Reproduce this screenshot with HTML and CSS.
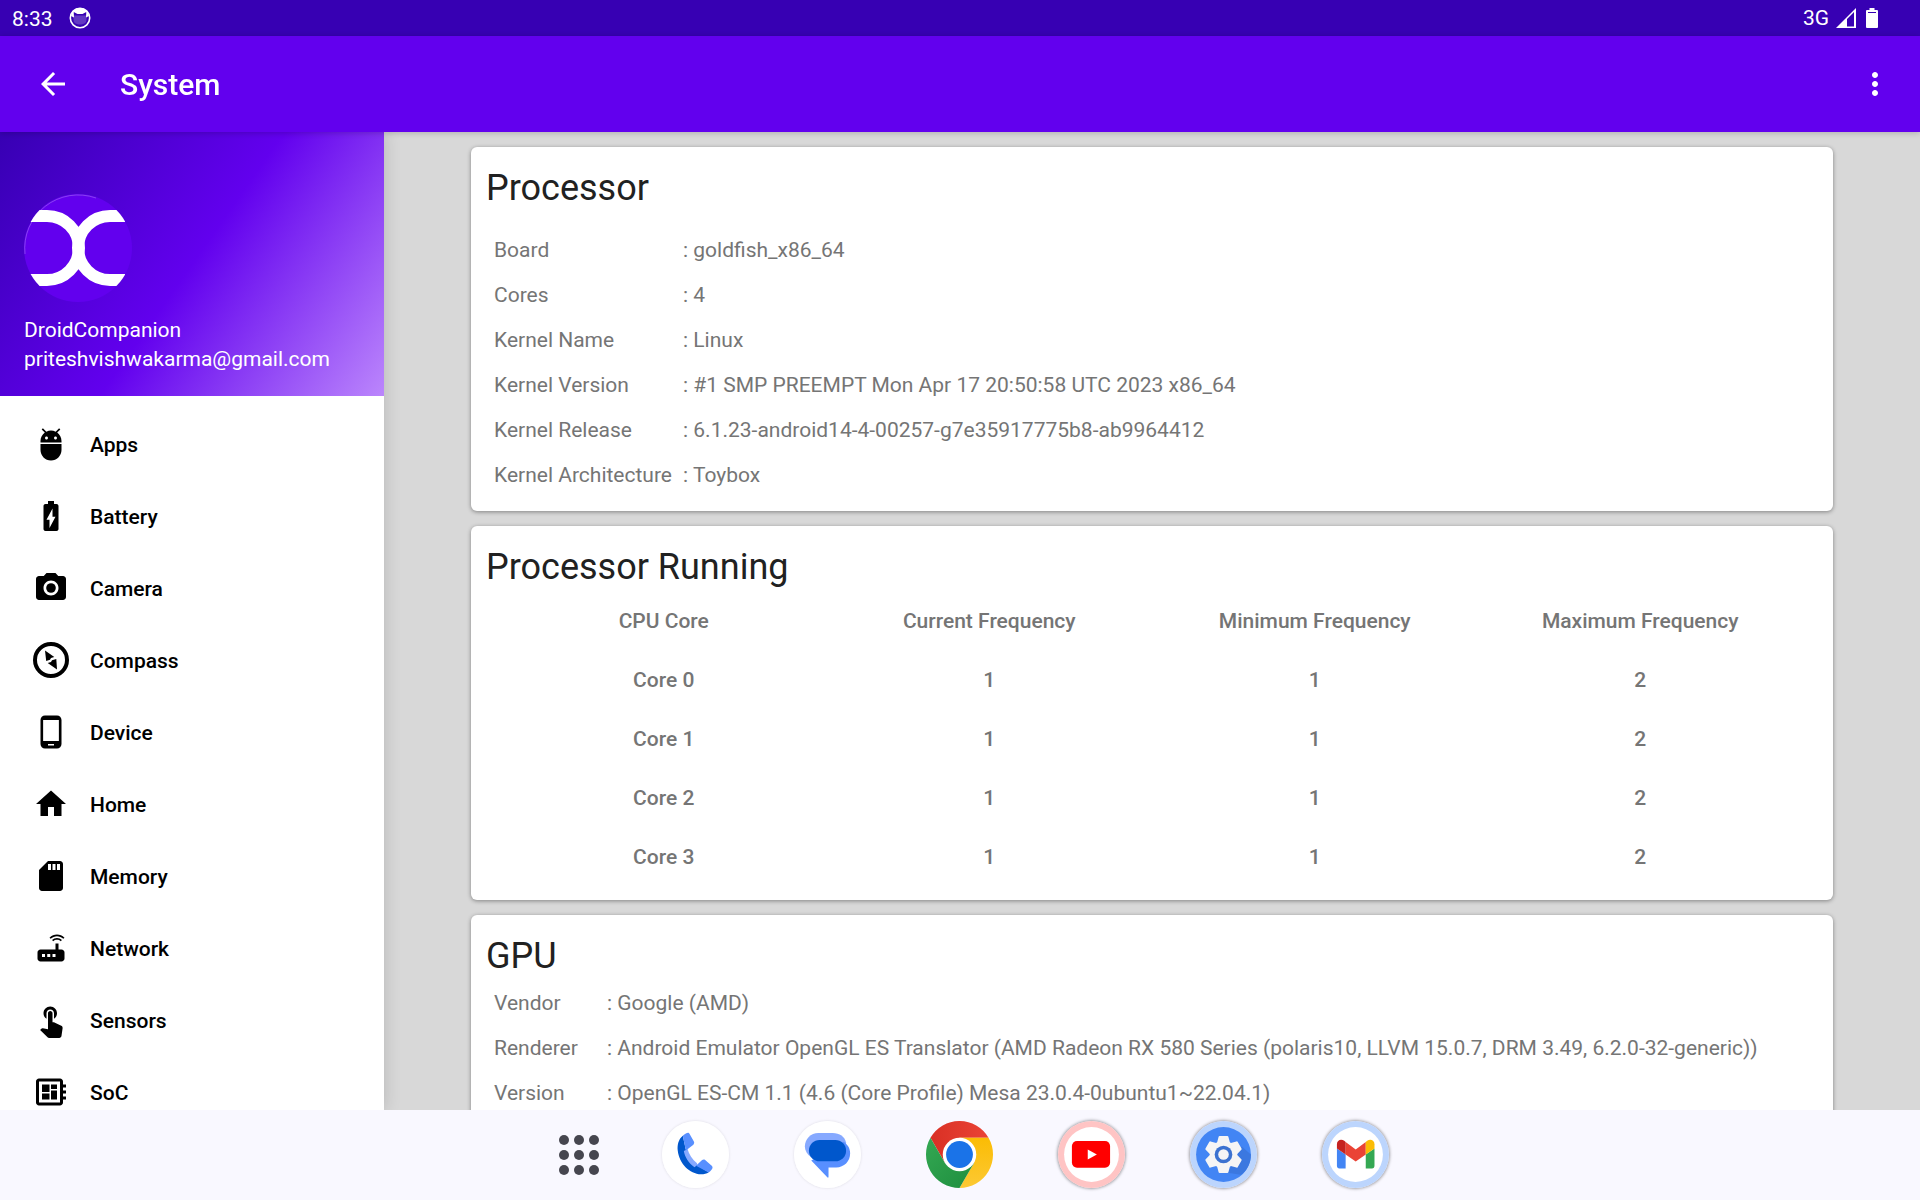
FILE: index.html
```html
<!DOCTYPE html>
<html lang="en">
<head>
<meta charset="utf-8">
<meta name="viewport" content="width=device-width, initial-scale=1">
<title>System</title>
<link rel="stylesheet" href="styles.css">
</head>
<body>
<div class="status-bar">
  <span class="status-time">8:33</span>
  <svg class="status-cat" viewBox="0 0 22 22" aria-hidden="true">
    <circle cx="11" cy="11" r="9.700" fill="none" stroke="#fff" stroke-width="1.600"/>
    <path fill="#fff" d="M2 9C3 4 6 1 11 1s8 3 9 8l-3 1.500.3-5.500L13.500 7h-5L4.700 5 5 10.500z"/>
    <path fill="#fff" opacity=".22" d="M4.500 8.500h13v4.500c0 3-3 4.500-6.500 4.500S4.500 16 4.500 13z"/>
  </svg>
  <div class="status-right">
    <span>3G</span>
    <svg class="status-signal" viewBox="0 0 20 20" aria-hidden="true"><path fill="#fff" fill-rule="evenodd" d="M0 20L20 0v20zM11 11v7.500h7V4z"/></svg>
    <svg class="status-battery" viewBox="0 0 12 20" aria-hidden="true"><path fill="#fff" fill-rule="evenodd" d="M3.500 0h5v2H11a1 1 0 0 1 1 1v16a1 1 0 0 1-1 1H1a1 1 0 0 1-1-1V3a1 1 0 0 1 1-1h2.500zM2 4v1h8V4z"/></svg>
  </div>
</div>

<header class="app-bar">
  <button class="icon-button" type="button" aria-label="Back">
    <svg class="icon" viewBox="0 0 24 24"><path d="M20 11H7.830l5.590-5.590L12 4l-8 8 8 8 1.410-1.410L7.830 13H20v-2z"/></svg>
  </button>
  <h1 class="app-title">System</h1>
  <button class="icon-button" type="button" aria-label="More options">
    <svg class="icon" viewBox="0 0 24 24"><path d="M12 8c1.100 0 2-.9 2-2s-.9-2-2-2-2 .9-2 2 .9 2 2 2zm0 2c-1.100 0-2 .9-2 2s.9 2 2 2 2-.9 2-2-.9-2-2-2zm0 6c-1.100 0-2 .9-2 2s.9 2 2 2 2-.9 2-2-.9-2-2-2z"/></svg>
  </button>
</header>

<div class="workspace">
  <aside class="drawer">
    <div class="profile">
      <svg class="avatar" viewBox="0 0 108 108" aria-hidden="true">
        <clipPath id="avatar-clip"><circle cx="54" cy="54" r="54"/></clipPath>
        <circle cx="54" cy="54" r="54" fill="#6200ee"/>
        <g clip-path="url(#avatar-clip)" fill="none" stroke="#fff" stroke-width="12">
          <path d="M0 22H23A32 32 0 0 1 23 86H0"/>
          <path d="M101 22H86A32 32 0 0 0 86 86H101"/>
        </g>
        <path d="M1 60A53.500 53.500 0 0 1 72 4" fill="none" stroke="#fff" stroke-opacity=".25"/>
      </svg>
      <div class="profile-text">DroidCompanion</div>
      <div class="profile-text">priteshvishwakarma@gmail.com</div>
    </div>
    <nav class="menu">
      <a class="menu-item" href="#apps"><svg class="icon" viewBox="0 0 24 24"><path d="M5 16c0 3.870 3.130 7 7 7s7-3.130 7-7v-4H5v4zM16.120 4.370l2.100-2.100-.82-.83-2.300 2.310C14.160 3.280 13.120 3 12 3s-2.160.28-3.090.75L6.600 1.440l-.82.83 2.100 2.100C6.140 5.640 5 7.680 5 10v1h14v-1c0-2.320-1.140-4.360-2.880-5.630zM9 9c-.55 0-1-.45-1-1s.45-1 1-1 1 .45 1 1-.45 1-1 1zm6 0c-.55 0-1-.45-1-1s.45-1 1-1 1 .45 1 1-.45 1-1 1z"/></svg><span class="menu-label">Apps</span></a>
      <a class="menu-item" href="#battery"><svg class="icon" viewBox="0 0 24 24"><path d="M15.670 4H14V2h-4v2H8.330C7.600 4 7 4.600 7 5.330v15.330C7 21.400 7.600 22 8.330 22h7.330c.74 0 1.340-.6 1.340-1.330V5.330C17 4.600 16.400 4 15.670 4zM11 20v-5.500H9L13 7v5.500h2L11 20z"/></svg><span class="menu-label">Battery</span></a>
      <a class="menu-item" href="#camera"><svg class="icon" viewBox="0 0 24 24"><circle cx="12" cy="12" r="3.200"/><path d="M9 2L7.170 4H4c-1.100 0-2 .9-2 2v12c0 1.100.9 2 2 2h16c1.100 0 2-.9 2-2V6c0-1.100-.9-2-2-2h-3.170L15 2H9zm3 15c-2.760 0-5-2.240-5-5s2.240-5 5-5 5 2.240 5 5-2.240 5-5 5z"/></svg><span class="menu-label">Camera</span></a>
      <a class="menu-item" href="#compass"><svg class="icon" viewBox="0 0 36 36"><circle cx="18" cy="18" r="16" fill="none" stroke="#000" stroke-width="4"/><path d="M12 8.500L21.300 15l-3.300 1-1 1.800L13.200 19zM24 27.500L14.700 21l3.300-1 1-1.800L23.300 17z"/></svg><span class="menu-label">Compass</span></a>
      <a class="menu-item" href="#device"><svg class="icon" viewBox="0 0 24 24"><path d="M16 1H8C6.340 1 5 2.340 5 4v16c0 1.660 1.340 3 3 3h8c1.660 0 3-1.340 3-3V4c0-1.660-1.340-3-3-3zm-2 20h-4v-1h4v1zm3.250-3H6.750V4h10.500v14z"/></svg><span class="menu-label">Device</span></a>
      <a class="menu-item" href="#home"><svg class="icon" viewBox="0 0 24 24"><path d="M10 20v-6h4v6h5v-8h3L12 3 2 12h3v8z"/></svg><span class="menu-label">Home</span></a>
      <a class="menu-item" href="#memory"><svg class="icon" viewBox="0 0 24 24"><path d="M18 2h-8L4.020 8 4 20c0 1.100.9 2 2 2h12c1.100 0 2-.9 2-2V4c0-1.100-.9-2-2-2zm-6 6h-2V4h2v4zm3 0h-2V4h2v4zm3 0h-2V4h2v4z"/></svg><span class="menu-label">Memory</span></a>
      <a class="menu-item" href="#network"><svg class="icon" viewBox="0 0 24 24"><path d="M20.200 5.900l.8-.8C19.600 3.700 17.800 3 16 3s-3.600.7-5 2.100l.8.8C13 4.800 14.500 4.200 16 4.200s3 .6 4.200 1.700zm-.9.8c-.9-.9-2.100-1.400-3.300-1.400s-2.400.5-3.300 1.400l.8.8c.7-.7 1.600-1 2.500-1 .9 0 1.800.3 2.500 1l.8-.8zM19 13h-2V9h-2v4H5c-1.100 0-2 .9-2 2v4c0 1.100.9 2 2 2h14c1.100 0 2-.9 2-2v-4c0-1.100-.9-2-2-2zM8 18H6v-2h2v2zm3.500 0h-2v-2h2v2zm3.500 0h-2v-2h2v2z"/></svg><span class="menu-label">Network</span></a>
      <a class="menu-item" href="#sensors"><svg class="icon" viewBox="0 0 24 24"><path d="M9 11.240V7.500C9 6.120 10.120 5 11.500 5S14 6.120 14 7.500v3.740c1.210-.81 2-2.180 2-3.740C16 5.010 13.990 3 11.500 3S7 5.010 7 7.500c0 1.560.79 2.930 2 3.740zm9.840 4.630l-4.540-2.260c-.17-.07-.35-.11-.54-.11H13v-6c0-.83-.67-1.500-1.500-1.500S10 6.670 10 7.500v10.740l-3.430-.72c-.08-.01-.15-.03-.24-.03-.31 0-.59.13-.79.33l-.79.8 4.940 4.940c.27.27.65.44 1.060.44h6.790c.75 0 1.330-.55 1.440-1.280l.75-5.270c.01-.07.02-.14.02-.2 0-.62-.38-1.160-.91-1.380z"/></svg><span class="menu-label">Sensors</span></a>
      <a class="menu-item" href="#soc"><svg class="icon" viewBox="0 0 24 24"><path d="M22 9V7h-2V5c0-1.100-.9-2-2-2H4c-1.100 0-2 .9-2 2v14c0 1.100.9 2 2 2h14c1.100 0 2-.9 2-2v-2h2v-2h-2v-2h2v-2h-2V9h2zm-4 10H4V5h14v14zM6 13h5v4H6zm6-6h4v3h-4zM6 7h5v5H6zm6 4h4v6h-4z"/></svg><span class="menu-label">SoC</span></a>
    </nav>
  </aside>

  <main class="content">
    <section class="card">
      <h2 class="card-title">Processor</h2>
      <table class="facts facts-spaced">
        <tr><th scope="row">Board</th><td>: goldfish_x86_64</td></tr>
        <tr><th scope="row">Cores</th><td>: 4</td></tr>
        <tr><th scope="row">Kernel Name</th><td>: Linux</td></tr>
        <tr><th scope="row">Kernel Version</th><td>: #1 SMP PREEMPT Mon Apr 17 20:50:58 UTC 2023 x86_64</td></tr>
        <tr><th scope="row">Kernel Release</th><td>: 6.1.23-android14-4-00257-g7e35917775b8-ab9964412</td></tr>
        <tr><th scope="row">Kernel Architecture</th><td>: Toybox</td></tr>
      </table>
    </section>

    <section class="card">
      <h2 class="card-title">Processor Running</h2>
      <table class="cores">
        <thead>
          <tr><th scope="col">CPU Core</th><th scope="col">Current Frequency</th><th scope="col">Minimum Frequency</th><th scope="col">Maximum Frequency</th></tr>
        </thead>
        <tbody>
          <tr><th scope="row">Core 0</th><td>1</td><td>1</td><td>2</td></tr>
          <tr><th scope="row">Core 1</th><td>1</td><td>1</td><td>2</td></tr>
          <tr><th scope="row">Core 2</th><td>1</td><td>1</td><td>2</td></tr>
          <tr><th scope="row">Core 3</th><td>1</td><td>1</td><td>2</td></tr>
        </tbody>
      </table>
    </section>

    <section class="card">
      <h2 class="card-title">GPU</h2>
      <table class="facts facts-narrow">
        <tr><th scope="row">Vendor</th><td>: Google (AMD)</td></tr>
        <tr><th scope="row">Renderer</th><td>: Android Emulator OpenGL ES Translator (AMD Radeon RX 580 Series (polaris10, LLVM 15.0.7, DRM 3.49, 6.2.0-32-generic))</td></tr>
        <tr><th scope="row">Version</th><td>: OpenGL ES-CM 1.1 (4.6 (Core Profile) Mesa 23.0.4-0ubuntu1~22.04.1)</td></tr>
      </table>
    </section>
  </main>
</div>

<footer class="taskbar">
  <button class="all-apps" type="button" aria-label="All apps">
    <svg class="all-apps-icon" viewBox="0 0 40 40" fill="#46464f"><circle cx="5" cy="5" r="5"/><circle cx="20" cy="5" r="5"/><circle cx="35" cy="5" r="5"/><circle cx="5" cy="20" r="5"/><circle cx="20" cy="20" r="5"/><circle cx="35" cy="20" r="5"/><circle cx="5" cy="35" r="5"/><circle cx="20" cy="35" r="5"/><circle cx="35" cy="35" r="5"/></svg>
  </button>
  <div class="dock">
    <button class="dock-app" type="button" aria-label="Phone">
      <svg viewBox="0 0 66 66"><circle cx="33" cy="33" r="33" fill="#fff"/>
        <path fill="#86a9ff" d="M20 28.500L25 27c1.500 6 5 11 9.500 14.500L35 46l-4 1C25 43 20.500 36 20 28.500z"/>
        <path fill="#0057cc" d="M20.500 14.500C16 18 15 24 15.500 29 17 42 27 52 38.500 52.500c3 0 5.500-.5 7.500-2L34.500 43.500l-2.500 2C26 41 22.500 35.500 21.500 29.500l2-1z"/>
        <path fill="#588fff" d="M20.500 14.500c1.500-1.500 3-2.500 4.500-2.800 1-.2 1.800.3 2.200 1l4.200 7.600c.6 1 .3 2.200-.5 3L23.500 29z"/>
        <path fill="#588fff" d="M33.500 44L39.500 38.500c.9-.8 2-.9 3-.2l6.500 5.700c1 1 1 2.200.3 3.200-1 1.500-2 2.500-3.300 3.600z"/></svg>
    </button>
    <button class="dock-app" type="button" aria-label="Messages">
      <svg viewBox="0 0 66 66"><circle cx="33" cy="33" r="33" fill="#fff"/>
        <path fill="#86a9ff" d="M24 11.700H38c7 0 12 3.500 13.300 9.500V36H17.500C13 33 10.700 29 10.700 25 10.700 17.500 16.500 11.700 24 11.700z"/>
        <path fill="#588fff" d="M49 20.500c4 3 6.300 6.500 6.300 11.500 0 7.700-6 13.700-13.700 13.700H34V55c0 .9-.6 1.100-1.200.5L17 39z"/>
        <rect x="14.700" y="18.700" width="36.600" height="21" rx="10.500" fill="#0057cc"/></svg>
    </button>
    <button class="dock-app dock-flat" type="button" aria-label="Chrome">
      <svg viewBox="0 0 66 66">
        <defs>
          <linearGradient id="chrome-red" x1="0" x2="1"><stop offset="0" stop-color="#d93025"/><stop offset="1" stop-color="#ea4335"/></linearGradient>
          <linearGradient id="chrome-yellow" x1="0" x2="0" y1="1" y2="0"><stop offset="0" stop-color="#fcc934"/><stop offset="1" stop-color="#fbbc04"/></linearGradient>
          <linearGradient id="chrome-green" x1="0" x2="1" y1="0" y2="1"><stop offset="0" stop-color="#34a853"/><stop offset="1" stop-color="#1e8e3e"/></linearGradient>
        </defs>
        <path fill="url(#chrome-red)" d="M4.420 16.500A33 33 0 0 1 61.580 16.500H33V33L18.710 41.250z"/>
        <path fill="url(#chrome-yellow)" d="M61.580 16.500A33 33 0 0 1 33 66L47.290 41.250 33 33V16.500z"/>
        <path fill="url(#chrome-green)" d="M33 66A33 33 0 0 1 4.420 16.500L18.710 41.250 33 33 47.290 41.250z"/>
        <circle cx="33" cy="33" r="16.500" fill="#fff"/><circle cx="33" cy="33" r="13.200" fill="#1a73e8"/></svg>
    </button>
    <button class="dock-app dock-ringed" type="button" aria-label="YouTube">
      <svg viewBox="0 0 66 66"><circle cx="33" cy="33" r="33" fill="#ffc4c4"/><circle cx="33" cy="33" r="27" fill="#fff"/>
        <rect x="13.700" y="19.700" width="37.600" height="26.300" rx="5" fill="#f00"/><path fill="#fff" d="M29.300 28L38.300 33 29.300 38z"/></svg>
    </button>
    <button class="dock-app dock-ringed" type="button" aria-label="Settings">
      <svg viewBox="0 0 66 66"><circle cx="33" cy="33" r="33" fill="#bcd5fd"/><circle cx="33" cy="33" r="27" fill="#4285f4"/>
        <path fill="#3b78e0" d="M51 25l9 8c0 9-4 16-10 20L37 51z"/>
        <g fill="#f5f5f5" transform="translate(33 33)">
          <circle r="13.500"/>
          <path id="tooth" d="M-6.500-11L-4.800-17.500Q-4.600-18.300-3.800-18.300H3.800Q4.600-18.300 4.800-17.500L6.500-11z"/>
          <use href="#tooth" transform="rotate(60)"/><use href="#tooth" transform="rotate(120)"/><use href="#tooth" transform="rotate(180)"/><use href="#tooth" transform="rotate(240)"/><use href="#tooth" transform="rotate(300)"/>
        </g>
        <circle cx="33" cy="33" r="8.700" fill="#3b72d0"/><circle cx="33" cy="33" r="5.200" fill="#f5f5f5"/></svg>
    </button>
    <button class="dock-app dock-ringed" type="button" aria-label="Gmail">
      <svg viewBox="0 0 66 66"><circle cx="33" cy="33" r="33" fill="#bcd5fd"/><circle cx="33" cy="33" r="27" fill="#fff"/>
        <path fill="#4285f4" d="M14.700 27L23.300 33v13.700H17.200a2.500 2.500 0 0 1-2.500-2.500z"/>
        <path fill="#34a853" d="M51.700 27L43.100 33v13.700h6.100a2.500 2.500 0 0 0 2.500-2.500z"/>
        <path fill="#ea4335" d="M23.300 20.600L33.200 28l9.900-7.400V33l-9.900 7-9.900-7z"/>
        <path fill="#c5221f" d="M14.700 22.800c0-4 4.200-5.600 7.200-3.300l1.400 1.100V33l-8.600-6z"/>
        <path fill="#fbbc04" d="M51.700 22.800c0-4-4.200-5.600-7.200-3.300l-1.400 1.100V33l8.600-6z"/></svg>
    </button>
  </div>
</footer>
</body>
</html>
```
FILE: styles.css
```css
* { box-sizing: border-box; }

body {
  margin: 0;
  height: 100vh;
  display: flex;
  flex-direction: column;
  overflow: hidden;
  font-family: Roboto, "Liberation Sans", sans-serif;
  font-size: 21px;
  line-height: 24px;
  color: #000;
  background: #d8d8d8;
}

button {
  margin: 0;
  padding: 0;
  border: 0;
  background: none;
  color: inherit;
  font: inherit;
  cursor: pointer;
}

svg { display: block; flex: none; }

.icon { width: 36px; height: 36px; fill: currentColor; }

/* Status bar */
.status-bar {
  flex: none;
  display: flex;
  align-items: center;
  height: 36px;
  padding: 0 42px 0 12px;
  background: #3700b3;
  color: #fff;
}
.status-time { padding-top: 2px; }
.status-cat { width: 22px; height: 22px; margin-left: 16px; }
.status-right { display: flex; align-items: center; margin-left: auto; }
.status-signal { width: 20px; height: 20px; margin: 0 10px 0 7px; }
.status-battery { width: 12px; height: 20px; }

/* App bar */
.app-bar {
  position: relative;
  z-index: 2;
  flex: none;
  display: flex;
  align-items: center;
  height: 96px;
  padding: 0 27px 0 35px;
  background: #6200ee;
  color: #fff;
  box-shadow: 0 1px 6px rgba(0, 0, 0, 0.2);
}
.app-title {
  flex: 1;
  margin: 0 0 0 49px;
  padding-top: 2px;
  font-size: 30px;
  line-height: 36px;
  font-weight: 500;
}

/* Drawer */
.workspace { flex: 1; min-height: 0; display: flex; }
.drawer {
  position: relative;
  z-index: 1;
  flex: none;
  width: 384px;
  overflow-y: auto;
  scrollbar-width: none;
  background: #fff;
  box-shadow: 0 0 16px rgba(0, 0, 0, 0.16);
}
.profile {
  height: 264px;
  padding: 62px 24px 0;
  color: #fff;
  background: linear-gradient(125deg, #3700b3, #6200ee 50%, #bb86fc);
}
.avatar { width: 108px; height: 108px; margin-bottom: 14px; }
.profile-text { line-height: 29px; }
.menu { padding: 12px 0; }
.menu-item {
  display: flex;
  align-items: center;
  gap: 21px;
  height: 72px;
  padding: 0 33px;
  color: #000;
  font-weight: 500;
  text-decoration: none;
}
.menu-label { padding-top: 2px; }

/* Cards */
.content {
  flex: 1;
  min-width: 0;
  display: flex;
  flex-direction: column;
  gap: 15px;
  padding: 15px 87px;
  overflow-y: auto;
  scrollbar-width: none;
}
.card {
  flex: none;
  padding: 18px 15px 14px;
  border-radius: 6px;
  background: #fff;
  box-shadow: 0 1px 4px rgba(0, 0, 0, 0.4);
}
.card-title {
  margin: 0;
  font-size: 36px;
  line-height: 47px;
  font-weight: 400;
  color: #212121;
}

table { border-collapse: collapse; color: #757575; }
th, td { padding: 0; }

.facts { margin-left: 8px; }
.facts-spaced { margin-top: 15px; }
.facts tr { height: 45px; }
.facts th { min-width: 189px; width: 189px; text-align: left; font-weight: 400; white-space: nowrap; }
.facts-narrow th { min-width: 113px; width: 113px; }

.cores {
  width: calc(100% - 30px);
  margin: 0 15px;
  table-layout: fixed;
  font-weight: 500;
  text-align: center;
}
.cores tr { height: 59px; }
.cores th { font-weight: 500; }

/* Taskbar */
.taskbar {
  position: relative;
  z-index: 3;
  flex: none;
  display: flex;
  align-items: center;
  justify-content: center;
  gap: 35px;
  height: 90px;
  padding-bottom: 1px;
  background: #f9f8ff;
}
.all-apps { display: flex; justify-content: center; width: 96px; }
.all-apps-icon { width: 40px; height: 40px; }
.dock { display: flex; gap: 65px; }
.dock-app { width: 67px; height: 67px; border-radius: 50%; box-shadow: 0 0 3px rgba(0, 0, 0, 0.12); }
.dock-app svg { width: 67px; height: 67px; }
.dock-flat { box-shadow: none; }
.dock-ringed { box-shadow: 0 0 3px 1px rgba(0, 0, 0, 0.35); }
```
